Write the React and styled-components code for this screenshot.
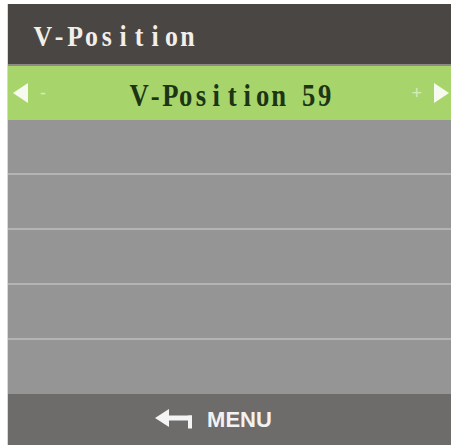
import React from "react";
import styled, { createGlobalStyle } from "styled-components";

const GlobalStyle = createGlobalStyle`
  html, body {
    margin: 0;
    padding: 0;
    background: #ffffff;
  }
`;

// OSD font is a narrow fixed-pitch serif; no such font is installed, so each
// character sits in its own fixed-width cell and is squeezed horizontally.
function MonoText({ text, cell }) {
  return (
    <>
      {text.split("").map((ch, i) => (
        <Cell key={i} cell={cell}>
          <Glyph>{ch === " " ? "\u00a0" : ch}</Glyph>
        </Cell>
      ))}
    </>
  );
}

function App() {
  return (
    <>
      <GlobalStyle />
      <Panel>
        <Header>
          <MonoText text="V-Position" cell={16} />
        </Header>
        <ValueRow>
          <Side>
            <Triangle dir="left" />
            <Sign>-</Sign>
          </Side>
          <ValueText>
            <MonoText text="V-Position 59" cell={15.4} />
          </ValueText>
          <Side right>
            <Sign>+</Sign>
            <Triangle dir="right" />
          </Side>
        </ValueRow>
        <Rows>
          {[0, 1, 2, 3, 4].map((i) => (
            <EmptyRow key={i} first={i === 0} />
          ))}
        </Rows>
        <Footer>
          <svg width="40" height="22" viewBox="0 0 40 22">
            <polygon points="0,9 14,0 14,18" fill="#f4f4f4" />
            <rect x="13" y="6.5" width="24" height="5" fill="#f4f4f4" />
            <rect x="33" y="6.5" width="4" height="13" fill="#f4f4f4" />
          </svg>
          <FooterLabel>MENU</FooterLabel>
        </Footer>
      </Panel>
    </>
  );
}

export default App;

const Panel = styled.div`
  margin: 4px 1px 0 7px;
  width: 443px;
  display: flex;
  flex-direction: column;
  background: #959595;
  border-left: 1px solid #d8d8d8;
`;
const Cell = styled.span`
  display: inline-flex;
  justify-content: center;
  width: ${(p) => p.cell}px;
  white-space: pre;
`;
const Glyph = styled.span`
  display: inline-block;
  transform: scaleX(0.86);
`;
const Header = styled.div`
  height: 62px;
  background: #4a4644;
  color: #f2efe9;
  font-family: "Liberation Serif", "DejaVu Serif", serif;
  font-weight: bold;
  font-size: 30px;
  display: flex;
  align-items: center;
  padding-left: 27px;
  padding-top: 4px;
  box-sizing: border-box;
  border-bottom: 2px solid #8d8a86;
`;
const ValueRow = styled.div`
  height: 54px;
  background: #a7d56b;
  display: flex;
  align-items: center;
  justify-content: space-between;
  padding: 0 2px 0 5px;
`;
const Side = styled.div`
  display: flex;
  align-items: center;
  gap: 12px;
  width: 60px;
  justify-content: ${(p) => (p.right ? "flex-end" : "flex-start")};
`;
const Triangle = styled.div`
  width: 0;
  height: 0;
  border-top: 10px solid transparent;
  border-bottom: 10px solid transparent;
  ${(p) =>
    p.dir === "left"
      ? "border-right: 15px solid #f7fbef;"
      : "border-left: 15px solid #f7fbef;"}
`;
const Sign = styled.span`
  color: #d6ecb8;
  font-family: "Liberation Sans", Arial, sans-serif;
  font-size: 18px;
`;
const ValueText = styled.div`
  color: #1c3514;
  font-family: "Liberation Serif", "DejaVu Serif", serif;
  font-weight: bold;
  font-size: 31px;
  display: flex;
  margin-left: 2px;
  margin-top: 6px;
`;
const Rows = styled.div`
  display: flex;
  flex-direction: column;
`;
const EmptyRow = styled.div`
  height: 53px;
  background: #959595;
  border-top: ${(p) => (p.first ? "none" : "2px solid #b4b4b4")};
`;
const Footer = styled.div`
  height: 51px;
  margin-top: 1px;
  background: #6e6c6b;
  display: flex;
  align-items: center;
  justify-content: center;
  gap: 12px;
  padding-right: 32px;
`;
const FooterLabel = styled.span`
  color: #f2f2f2;
  font-family: "Liberation Sans", Arial, sans-serif;
  font-weight: bold;
  font-size: 22px;
`;
